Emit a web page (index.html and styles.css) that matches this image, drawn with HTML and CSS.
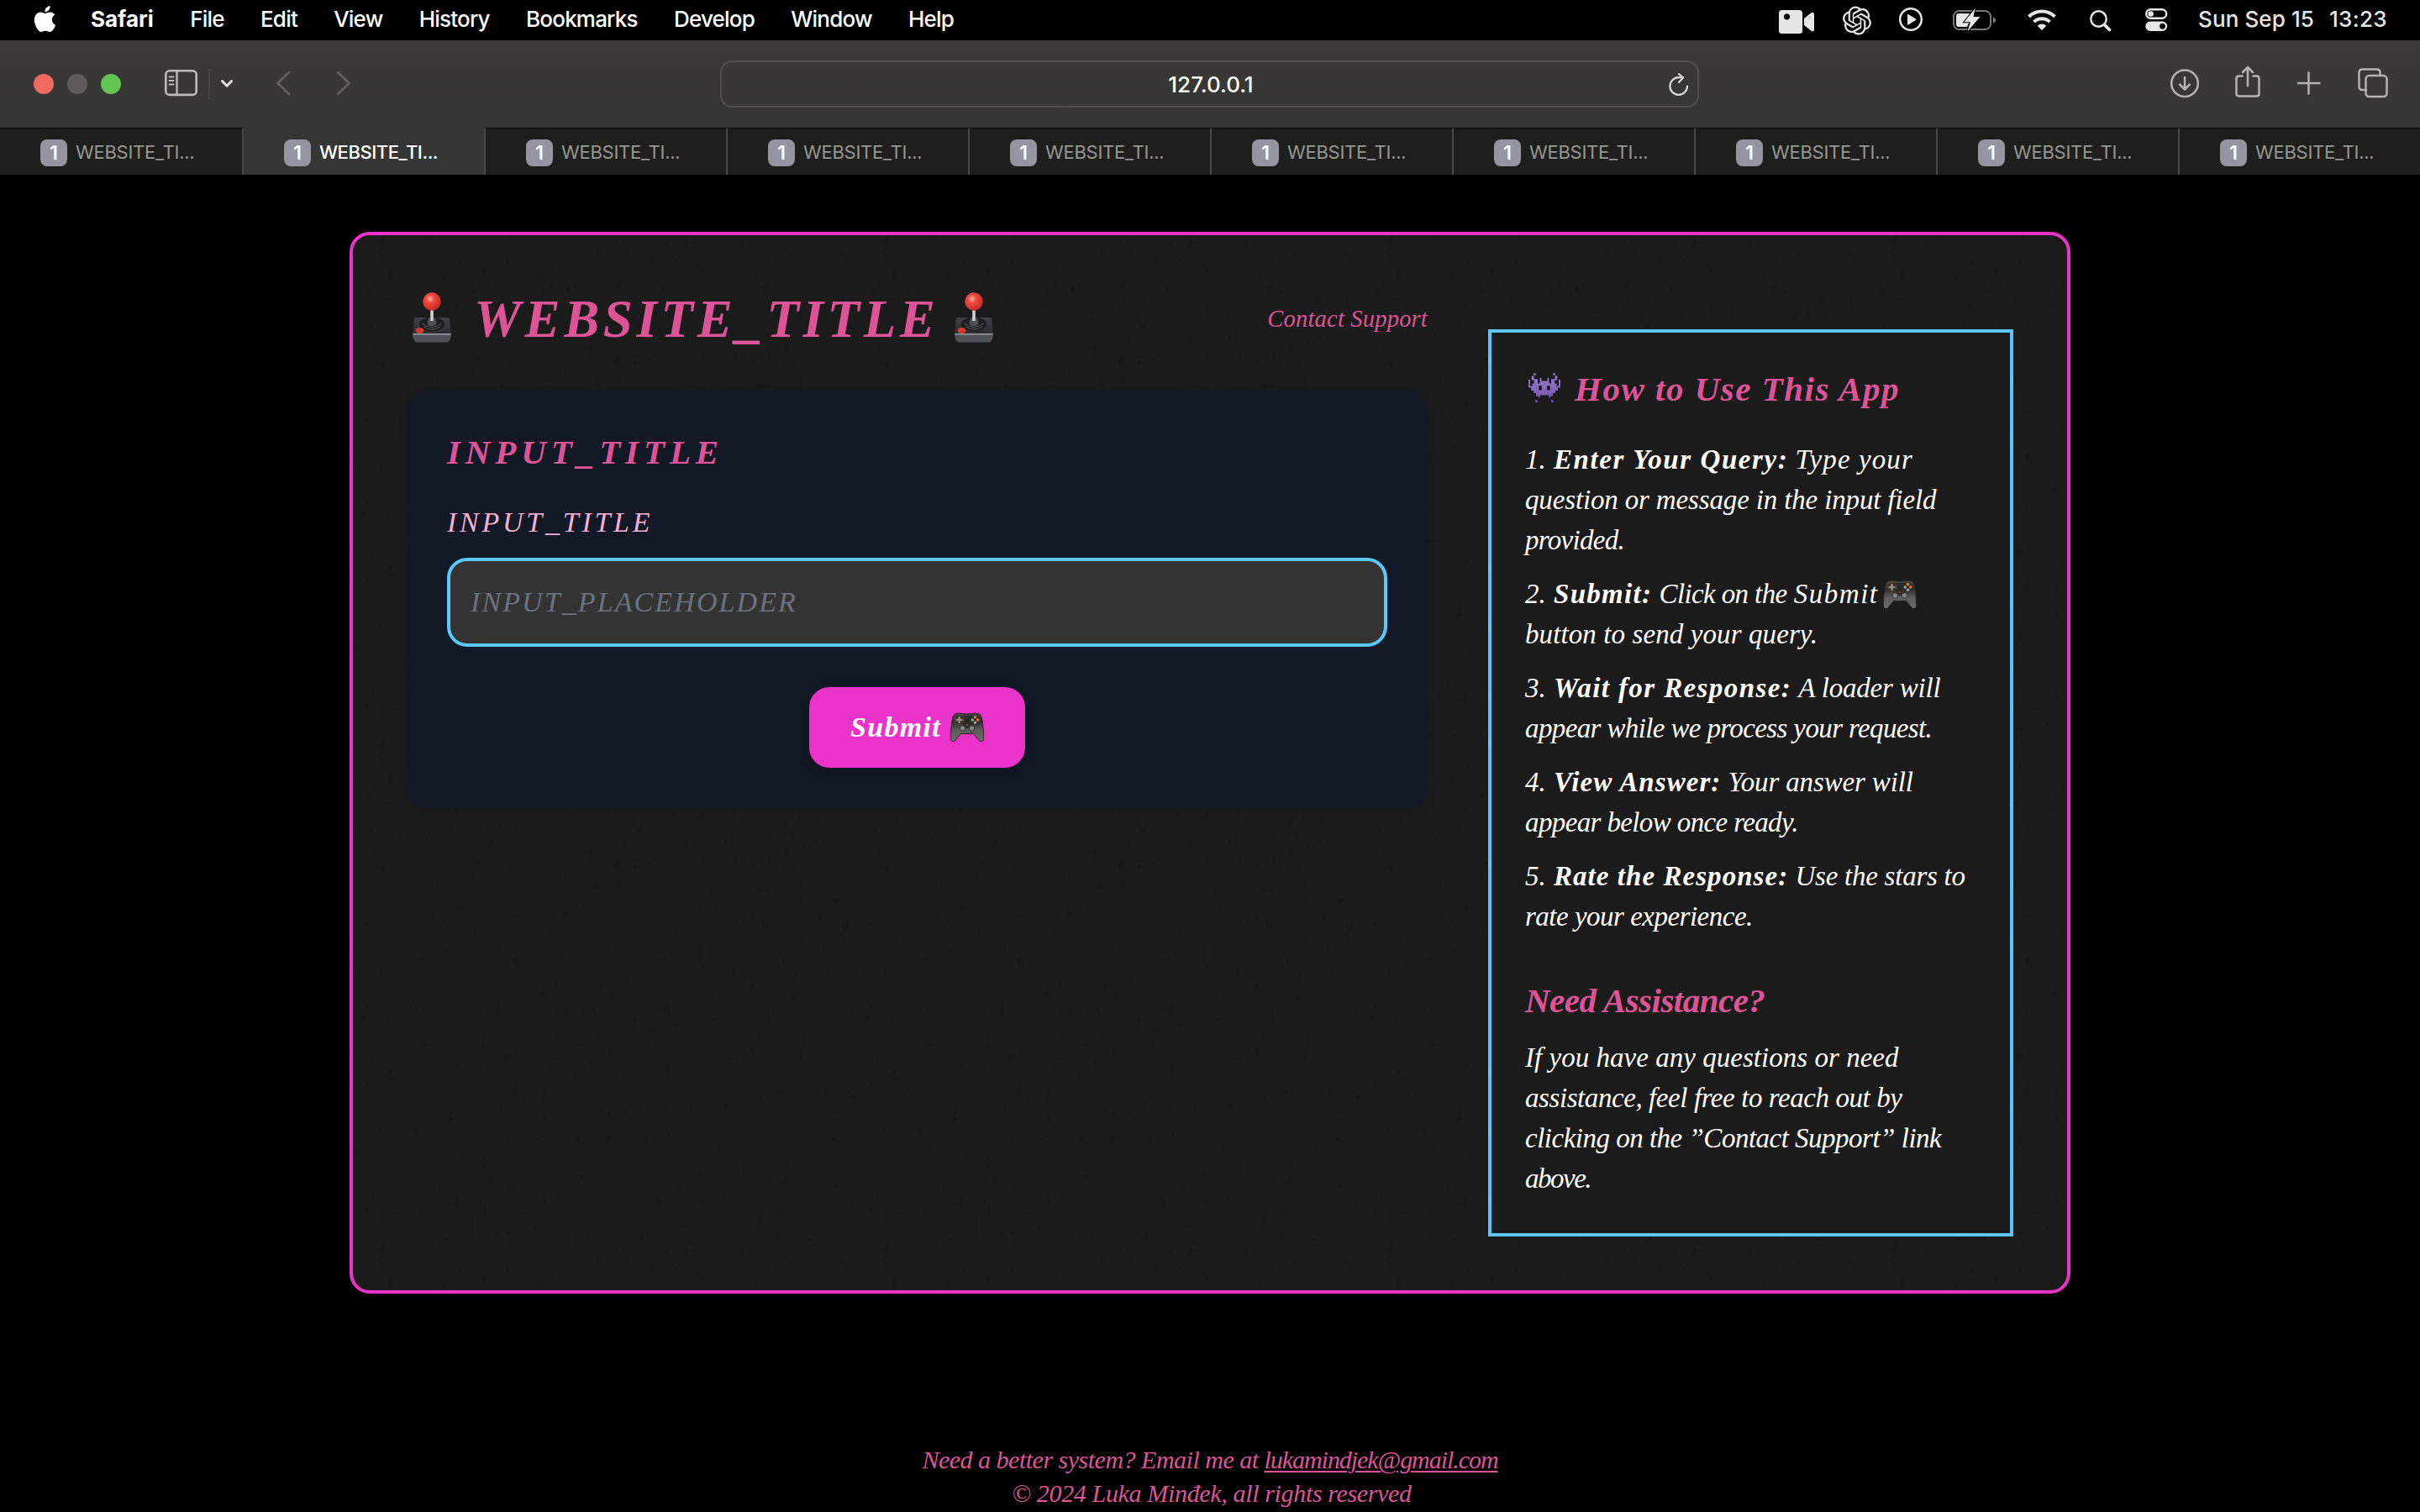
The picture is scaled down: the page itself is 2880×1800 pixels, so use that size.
FILE: index.html
```html
<!DOCTYPE html>
<html lang="en">
<head>
<meta charset="utf-8">
<title>WEBSITE_TITLE</title>
<link rel="stylesheet" href="styles.css">
</head>
<body>
<svg class="defs" aria-hidden="true">
  <defs>
    <linearGradient id="base" x1="0" y1="0" x2="0" y2="1"><stop offset="0" stop-color="#3f4147"/><stop offset="1" stop-color="#2b2c31"/></linearGradient>
    <radialGradient id="ball" cx=".4" cy=".35" r=".65"><stop offset="0" stop-color="#ffb3ac"/><stop offset=".35" stop-color="#f0483f"/><stop offset="1" stop-color="#c32a22"/></radialGradient>
    <linearGradient id="pad" x1="0" y1="0" x2="0" y2="1"><stop offset="0" stop-color="#4a4a48"/><stop offset=".3" stop-color="#2c2c2b"/><stop offset=".6" stop-color="#5c5d59"/><stop offset="1" stop-color="#6a6b66"/></linearGradient>
    <linearGradient id="alien" x1="0" y1="0" x2="0" y2="1"><stop offset="0" stop-color="#9a80c9"/><stop offset="1" stop-color="#7350a6"/></linearGradient>
  </defs>
  <symbol id="joystick" viewBox="0 0 46 60">
    <path d="M4 30h38q2 0 2.300 2l1.500 17H.2L1.700 32q.3-2 2.300-2z" fill="url(#base)"/>
    <path d="M.2 49h45.600v3q-.5 5-4 7.500H4.200Q.7 57 .2 52z" fill="#50525a"/>
    <path d="M.5 49.700h45" stroke="#9b9ca0" stroke-width="1.500"/>
    <ellipse cx="23" cy="38" rx="15" ry="8.500" fill="#1d1e20"/>
    <path d="M11 37q12 9 24 0M13 41q10 6 20 0" stroke="#55565a" fill="none"/>
    <path d="M18 34q1-5 5-5t5 5q2 6-5 6t-5-6z" fill="#4f5053"/>
    <path d="M21 20h4v14h-4z" fill="#a9aaad"/><path d="M22.300 20h1.500v14h-1.500z" fill="#e3e3e3"/>
    <circle cx="23" cy="11" r="10.700" fill="url(#ball)"/>
    <ellipse cx="8.500" cy="45.500" rx="5" ry="3.600" fill="#d8372c"/>
  </symbol>
  <symbol id="gamepad" viewBox="0 0 40 36">
    <path d="M4 3.500Q6 1 11 1q3 1 9 1t9-1q5 0 7 2.500 2 3 3 15t.5 14q-1 3-4.500 2l-7.500-9h-15l-7.500 9q-3.500 1-4.500-2Q0 30.500 1 18.500t3-15z" fill="url(#pad)" stroke="#242423"/>
    <path d="M13 4h14l-1 12q-6 6-12 0z" fill="#2b2b2a"/>
    <circle cx="10.500" cy="9" r="5.500" fill="#2c2926" stroke="#71492f" stroke-width=".8"/>
    <path d="M10.500 5v8M6.500 9h8" stroke="#8c8d8a" stroke-width="2.600"/>
    <circle cx="29.500" cy="9" r="5.500" fill="#292a29"/>
    <circle cx="29.500" cy="5.800" r="1.800" fill="#f4772f"/><circle cx="32.700" cy="9" r="1.800" fill="#f4772f"/>
    <circle cx="26.300" cy="9" r="1.800" fill="#a1a29e"/><circle cx="29.500" cy="12.300" r="1.800" fill="#a1a29e"/>
    <circle cx="14.500" cy="19" r="3.200" fill="#858682" stroke="#343533"/><circle cx="25.500" cy="19" r="3.200" fill="#858682" stroke="#343533"/>
    <circle cx="20" cy="15" r="1" fill="#a9552a"/>
  </symbol>
  <symbol id="invader" viewBox="0 0 14 12">
    <path d="M2.500 0h1.300v1H3v1.200h1.500V4H5V1.700h1V3h2V1.700h1V4h.5V2.200H11V1h-.8V0h1.300v1h.8v2h-1v1h.7v1h.5V2.500h1V6h-1v1.200h-1v1h-1v1.200h-1v.6H9v.6h1.800v1.200H9.500v-1H8.600V9H5.400v1.800h-.9v1H3.200v-1.200H5V10h-.500v-.6h-1V8.200h-1v-1h-1V6h-1V2.500h1V5H2V4h.7V3h-1V1h.8z" fill="url(#alien)" stroke="#19131f" stroke-width=".35"/>
    <path d="M4.800 5h1.100v1.800H4.800zM8.100 5h1.100v1.800H8.100z" fill="#17121d"/>
  </symbol>
</svg>

<header class="menubar">
  <svg class="apple" viewBox="0 0 24 24"><path d="M12.152 6.896c-.948 0-2.415-1.078-3.960-1.040-2.040.027-3.910 1.183-4.961 3.014-2.117 3.675-.546 9.103 1.519 12.090 1.013 1.454 2.208 3.090 3.792 3.039 1.520-.065 2.090-.987 3.935-.987 1.831 0 2.350.987 3.960.948 1.637-.026 2.676-1.480 3.676-2.948 1.156-1.688 1.636-3.325 1.662-3.415-.039-.013-3.182-1.221-3.220-4.857-.026-3.040 2.480-4.494 2.597-4.559-1.429-2.090-3.623-2.324-4.390-2.376-2-.156-3.675 1.090-4.610 1.090zM15.530 3.830c.843-1.012 1.400-2.427 1.245-3.830-1.207.052-2.662.805-3.532 1.818-.780.896-1.454 2.338-1.273 3.714 1.338.104 2.715-.688 3.559-1.701"/></svg>
  <nav class="menus"><b>Safari</b><span>File</span><span>Edit</span><span>View</span><span>History</span><span>Bookmarks</span><span>Develop</span><span>Window</span><span>Help</span></nav>
  <div class="status">
    <svg width="44" height="48" viewBox="2116 0 44 48"><path fill-rule="evenodd" d="M2120.500 12h21q3.500 0 3.500 3.500v21q0 3.500-3.500 3.500h-21q-3.500 0-3.500-3.500v-21q0-3.500 3.500-3.500zm6 4.200a3.700 3.700 0 1 0 .01 0zM2147 22l8.500-6.700q3.500-1.500 3.500 1.500v18.400q0 3-3.500 1.500L2147 30z"/></svg>
    <svg class="g33" width="34" height="48" viewBox="0 -5.300 24 33.880"><path d="M22.2819 9.8211a5.9847 5.9847 0 0 0-.5157-4.9108 6.0462 6.0462 0 0 0-6.5098-2.9A6.0651 6.0651 0 0 0 4.9807 4.1818a5.9847 5.9847 0 0 0-3.9977 2.9 6.0462 6.0462 0 0 0 .7427 7.0966 5.98 5.98 0 0 0 .511 4.9107 6.051 6.051 0 0 0 6.5146 2.9001A5.9847 5.9847 0 0 0 13.2599 24a6.0557 6.0557 0 0 0 5.7718-4.2058 5.9894 5.9894 0 0 0 3.9977-2.9001 6.0557 6.0557 0 0 0-.7475-7.0729zm-9.022 12.6081a4.4755 4.4755 0 0 1-2.8764-1.0408l.1419-.0804 4.7783-2.7582a.7948.7948 0 0 0 .3927-.6813v-6.7369l2.02 1.1686a.071.071 0 0 1 .038.052v5.5826a4.504 4.504 0 0 1-4.4945 4.4944zm-9.6607-4.1254a4.4708 4.4708 0 0 1-.5346-3.0137l.142.0852 4.783 2.7582a.7712.7712 0 0 0 .7806 0l5.8428-3.3685v2.3324a.0804.0804 0 0 1-.0332.0615L9.74 19.9502a4.4992 4.4992 0 0 1-6.1408-1.6464zM2.3408 7.8956a4.485 4.485 0 0 1 2.3655-1.9728V11.6a.7664.7664 0 0 0 .3879.6765l5.8144 3.3543-2.0201 1.1685a.0757.0757 0 0 1-.071 0l-4.8303-2.7865A4.504 4.504 0 0 1 2.3408 7.872zm16.5963 3.8558L13.1038 8.364 15.1192 7.2a.0757.0757 0 0 1 .071 0l4.8303 2.7913a4.4944 4.4944 0 0 1-.6765 8.1042v-5.6772a.79.79 0 0 0-.407-.667zm2.0107-3.0231l-.142-.0852-4.7735-2.7818a.7759.7759 0 0 0-.7854 0L9.409 9.2297V6.8974a.0662.0662 0 0 1 .0284-.0615l4.8303-2.7866a4.4992 4.4992 0 0 1 6.6802 4.66zM8.3065 12.863l-2.02-1.1638a.0804.0804 0 0 1-.038-.0567V6.0742a4.4992 4.4992 0 0 1 7.3757-3.4537l-.142.0805L8.704 5.459a.7948.7948 0 0 0-.3927.6813zm1.0976-2.3654l2.602-1.4998 2.6069 1.4998v2.9994l-2.5974 1.4997-2.6067-1.4997Z"/></svg>
    <svg class="g32" width="30" height="48" viewBox="2259 0 30 48"><circle cx="2274" cy="23" r="12.800" fill="none" stroke="#e6e6e6" stroke-width="2.500"/><path d="M2270 17.500v11.500q0 1 1 .6l9-5.500q1-.8 0-1.600l-9-5.500q-1-.5-1 .5z"/></svg>
    <svg class="g34" width="53" height="48" viewBox="2323 0 53 48"><rect x="2325" y="13" width="44" height="22" rx="6.500" fill="none" stroke="#777" stroke-width="2"/><path d="M2372 20.500q3 1 3 3.500t-3 3.500z" fill="#777"/><path d="M2331 16h14l-6 9h5l-3 7h-10q-3 0-3-3V19q0-3 3-3z"/><path d="M2350.500 10l-13 16.200h7.500l-3.500 11.300 15-17.500h-8z" stroke="#000" stroke-width="2" paint-order="stroke"/></svg>
    <svg class="g36" width="36" height="48" viewBox="2412 0 36 48"><path fill="none" stroke="#e6e6e6" stroke-width="4" d="M2414.500 19.800a22.500 22.500 0 0 1 31 0M2420.500 26a14 14 0 0 1 19 0"/><path d="M2430 36l-5.300-5.300a7.800 7.800 0 0 1 10.600 0z"/></svg>
    <svg class="g38" width="28" height="48" viewBox="2486 0 28 48"><g fill="none" stroke="#e6e6e6"><circle cx="2497.500" cy="22.500" r="9.200" stroke-width="2.500"/><path d="M2504.500 29.500l6 6" stroke-width="3.800" stroke-linecap="round"/></g></svg>
    <svg class="g38" width="30" height="48" viewBox="2552 0 30 48"><rect x="2554.200" y="11.200" width="24" height="10.600" rx="5.300" fill="none" stroke="#e6e6e6" stroke-width="2.400"/><circle cx="2559.600" cy="16.500" r="3.300"/><path fill-rule="evenodd" d="M2559 25.500h14.500a5.700 5.700 0 0 1 0 11.400H2559a5.700 5.700 0 0 1 0-11.400zm14.500 2.200a3.500 3.500 0 1 0 .01 0z"/></svg>
    <span class="date">Sun Sep 15</span><span class="time">13:23</span>
  </div>
</header>

<div class="toolbar">
  <div class="tools-left">
    <i class="light red"></i><i class="light gray"></i><i class="light green"></i>
    <svg class="sidebar-icon" width="86" height="104" viewBox="194 48 86 104"><g fill="none" stroke="#bcbbb9"><rect x="197.300" y="84.300" width="36.400" height="28.600" rx="4.500" stroke-width="2.600"/><path d="M210.500 84v29" stroke-width="2.400"/><path d="M201.500 91.500h5M201.500 96h5M201.500 100.500h5" stroke-width="1.800" stroke-linecap="round"/></g><path d="M249 82v36" stroke="#4b4a48" stroke-width="1.500"/><path d="M264.500 96.500l5.500 5.700 5.500-5.700" fill="none" stroke="#e2e1e0" stroke-width="3" stroke-linecap="round" stroke-linejoin="round"/></svg>
    <svg class="arrows" width="92" height="104" viewBox="327 48 92 104"><path d="M344 86l-13.500 13 13.500 13M402 86l13.500 13-13.500 13" fill="none" stroke="#62615f" stroke-width="2.600" stroke-linecap="round" stroke-linejoin="round"/></svg>
  </div>
  <div class="address"><span>127.0.0.1</span>
    <svg width="26" height="52" viewBox="1985 74 26 52"><g fill="none" stroke="#dcdcdb" stroke-width="2.200" stroke-linecap="round" stroke-linejoin="round"><path d="M2008 102.500a10.300 10.300 0 1 1-10.300-10.300h5"/><path d="M1998 88l5 4.500-5 5.500" /></g></svg>
  </div>
  <div class="tools-right">
    <svg width="262" height="104" viewBox="2581 48 262 104"><g fill="none" stroke="#b4b3b1" stroke-width="2.500" stroke-linecap="round" stroke-linejoin="round"><circle cx="2600" cy="99.300" r="15.800"/><path d="M2600 92v14M2594 100.500l6 6 6-6"/><path d="M2668.500 90.500h-4q-3 0-3 3v18q0 3 3 3h21q3 0 3-3v-18q0-3-3-3h-4M2675 80.500v21.500M2669 86l6-6 6 6"/><path d="M2747.500 86.500v25M2735 99h25.500"/><path d="M2815.500 107h-4q-4 0-4-4V86.500q0-4 4-4h17q4 0 4 4v3"/><rect x="2815.500" y="90" width="25" height="25" rx="4"/></g></svg>
  </div>
</div>

<div class="tabs">
  <div class="tab"><i>1</i><span>WEBSITE_TI...</span></div>
  <div class="tab active"><i>1</i><span>WEBSITE_TI...</span></div>
  <div class="tab"><i>1</i><span>WEBSITE_TI...</span></div>
  <div class="tab"><i>1</i><span>WEBSITE_TI...</span></div>
  <div class="tab"><i>1</i><span>WEBSITE_TI...</span></div>
  <div class="tab"><i>1</i><span>WEBSITE_TI...</span></div>
  <div class="tab"><i>1</i><span>WEBSITE_TI...</span></div>
  <div class="tab"><i>1</i><span>WEBSITE_TI...</span></div>
  <div class="tab"><i>1</i><span>WEBSITE_TI...</span></div>
  <div class="tab"><i>1</i><span>WEBSITE_TI...</span></div>
</div>

<main class="card">
  <section class="main">
    <div class="head">
      <svg class="joy"><use href="#joystick"/></svg><h1>WEBSITE_TITLE</h1><svg class="joy"><use href="#joystick"/></svg>
      <a class="contact">Contact Support</a>
    </div>
    <form class="panel">
      <h2>INPUT_TITLE</h2>
      <label>INPUT_TITLE</label>
      <div class="field">INPUT_PLACEHOLDER</div>
      <button type="button"><span>Submit</span><svg class="pad"><use href="#gamepad"/></svg></button>
    </form>
  </section>
  <aside class="help">
    <h3><svg class="inv"><use href="#invader"/></svg><span>How to Use This App</span></h3>
    <p class="item"><span>1. <b class="b15">Enter Your Query:</b> <span class="s9">Type your</span></span><span class="m1">question or message in the input field</span><span class="m7">provided.</span></p>
    <p class="item"><span>2. <b class="b11">Submit:</b> <span class="m6">Click on the</span> <em>Submit</em><svg class="pad inline"><use href="#gamepad"/></svg></span><span class="s1">button to send your query.</span></p>
    <p class="item"><span>3. <b class="b13">Wait for Response:</b> <span class="m3">A loader will</span></span><span class="m6">appear while we process your request.</span></p>
    <p class="item"><span>4. <b class="b9">View Answer:</b> <span class="m1">Your answer will</span></span><span class="m6">appear below once ready.</span></p>
    <p class="item"><span>5. <b class="b9">Rate the Response:</b> <span class="m2">Use the stars to</span></span><span class="m5">rate your experience.</span></p>
    <h4>Need Assistance?</h4>
    <p><span class="s0">If you have any questions or need</span><span class="m4">assistance, feel free to reach out by</span><span class="m5">clicking on the &rdquo;Contact Support&rdquo; link</span><span class="m15">above.</span></p>
  </aside>
</main>

<footer>
  <p class="f1">Need a better system? Email me at <a>lukamindjek@gmail.com</a></p>
  <p class="f2">&copy; 2024 Luka Minđek, all rights reserved</p>
</footer>
</body>
</html>
```
FILE: styles.css
```css
* { box-sizing: border-box; margin: 0; padding: 0; }
html, body { width: 2880px; height: 1800px; overflow: hidden; background: #000; }
body { font-family: "Apple Chancery", "Liberation Serif", serif; font-style: italic; }
svg { display: block; flex: none; }
.defs { position: absolute; width: 0; height: 0; }

/* macOS menu bar */
.menubar { display: flex; align-items: center; height: 48px; padding: 0 32px 0 38px; color: #fff; font: 500 26px/46px Inter, sans-serif; }
.apple { width: 31px; height: 31px; fill: #fff; margin-top: -3px; }
.menus { display: flex; gap: 43.300px; height: 48px; margin-left: 39px; letter-spacing: -.8px; }
.menus b { font-weight: 700; letter-spacing: 0; }
.status { display: flex; margin-left: auto; fill: #e6e6e6; color: #e6e6e6; }
.g33 { margin-left: 33px; } .g32 { margin-left: 32px; } .g34 { margin-left: 34px; } .g36 { margin-left: 36px; } .g38 { margin-left: 38px; }
.date { width: 156px; margin-left: 34px; letter-spacing: .1px; }
.time { width: 76px; letter-spacing: .3px; }

/* Safari toolbar */
.toolbar { display: grid; grid-template-columns: 857px 1165px 1fr; height: 104px; background: linear-gradient(#3a3936, #353533); }
.tools-left { display: flex; align-items: center; padding-left: 40px; }
.light { width: 24px; height: 24px; border-radius: 50%; margin-right: 16px; }
.red { background: #ee6a5f; } .gray { background: #5d5c5a; } .green { background: #62c554; }
.sidebar-icon { margin-left: 34px; }
.arrows { margin-left: 47px; }
.address { display: flex; align-items: center; justify-content: center; position: relative; height: 56px; margin-top: 24px; padding: 1px 0 0 3px; border: 2px solid #4f4e4c; border-radius: 14px; color: #fff; font: 500 26px/52px Inter, sans-serif; }
.address svg { position: absolute; right: 9px; top: 0; }
.tools-right { display: flex; justify-content: flex-end; padding-right: 37px; }

/* Tab strip */
.tabs { display: grid; grid-template-columns: 290px repeat(8, 288px) 1fr; height: 56px; background: #1e1e1c; }
.tab { display: flex; align-items: center; gap: 10px; padding: 2px 0 0 48px; border-top: 1px solid #000; border-right: 2px solid #474745; color: #969693; font: 22px/30px Inter, sans-serif; letter-spacing: -.25px; }
.tab span { padding-bottom: 2px; }
.tab:last-child { border-right: 0; }
.active { background: #353533; border-top-color: #353533; color: #fff; font-weight: 500; letter-spacing: -.45px; }
.tab i { width: 32px; height: 32px; border-radius: 8px; background: #9595a1; color: #fff; text-align: center; font: 600 23px/33px Inter, sans-serif; }

/* App card */
.card { display: grid; grid-template-columns: 1215px 625px; gap: 72px; width: 2048px; height: 1264px; margin: 68px auto 0; padding: 64px; border: 4px solid #ea33c8; border-radius: 24px;
  background: #1b1b1b url("data:image/svg+xml,%3Csvg xmlns='http://www.w3.org/2000/svg' width='600' height='600'%3E%3Cfilter id='n' x='0' y='0' width='100%25' height='100%25' color-interpolation-filters='sRGB'%3E%3CfeTurbulence type='fractalNoise' baseFrequency='.1 .07' numOctaves='3' seed='4' stitchTiles='stitch'/%3E%3CfeColorMatrix values='0 0 0 0 0 0 0 0 0 0 0 0 0 0 0 4 0 0 0 -2.650'/%3E%3C/filter%3E%3Crect width='600' height='600' filter='url(%23n)' opacity='.2'/%3E%3C/svg%3E"); }
.head { display: flex; align-items: center; height: 72px; padding-left: 7px; margin-bottom: 48px; }
.joy { width: 46px; height: 60px; margin-top: -4px; }
h1 { font-size: 63px; line-height: 72px; letter-spacing: 4.600px; color: #dc5496; margin: 0 19px 0 27px; }
.contact { margin-left: auto; font-size: 28.500px; line-height: 70px; letter-spacing: .2px; color: #dc5496; }
.panel { height: 498px; padding: 48px; border-radius: 24px; background: #121826; box-shadow: 0 4px 12px rgba(0,0,0,.1); }
h2, h3, h4 { font-size: 41px; line-height: 56px; color: #dc5496; }
h2 { margin-top: -2px; letter-spacing: 5.900px; }
label { display: block; margin: 32px 0 18px; font-size: 34px; line-height: 48px; letter-spacing: 3.750px; color: #f1b0d4; }
.field { height: 106px; padding: 1px 24px 0; border: 4px solid #5ac8fa; border-radius: 24px; background: #333; color: #6b7280; font-size: 34px; line-height: 96px; letter-spacing: 2.100px; }
button { display: flex; align-items: center; width: 257px; height: 96px; margin: 48px auto 0; padding-left: 49px; border: 0; border-radius: 24px; background: #ea33c8; color: #fff; font: italic 700 34px/48px "Apple Chancery", "Liberation Serif", serif; letter-spacing: 1.300px; box-shadow: 0 4px 10px rgba(0,0,0,.2); }
.pad { width: 40px; height: 36px; }
button .pad { margin-left: 11px; }
.pad.inline { display: inline-block; vertical-align: -8px; margin-left: 5px; }

.help { margin-top: 48px; height: 1080px; padding: 40px; border: 4px solid #5ac8fa; background: #1b1b1b; color: #fff; font-size: 33px; line-height: 48px; }
.help p > span { display: block; white-space: nowrap; }
h3 { display: flex; margin: -1px 0 32px; letter-spacing: 1.500px; }
.inv { width: 42px; height: 36px; margin: 9px 15px 0 2px; }
.item + .item { margin-top: 16px; }
h4 { margin: 48px 0 16px; letter-spacing: -.5px; }
.help em { letter-spacing: 1.500px; }
.b15 { margin-left: 1px; letter-spacing: 1.580px; } .b13 { margin-left: 1px; letter-spacing: 1.400px; } .b11 { margin-left: 1px; letter-spacing: 1.300px; } .b9 { margin-left: 1px; letter-spacing: 1.050px; }
.s9 { letter-spacing: 1.100px; } .s1 { letter-spacing: .1px; } .s0 { letter-spacing: .03px; }
.m1 { letter-spacing: -.150px; } .m2 { letter-spacing: -.250px; } .m3 { letter-spacing: -.2px; } .m4 { letter-spacing: -.420px; }
.m5 { letter-spacing: -.5px; } .m6 { letter-spacing: -.620px; } .m7 { letter-spacing: -.7px; } .m15 { letter-spacing: -1.500px; }

footer { margin-top: 178px; text-align: center; color: #dc5496; font-size: 30px; line-height: 40px; }
.f1 { letter-spacing: -.5px; }
.f1 a { letter-spacing: -1.050px; text-decoration: underline; text-decoration-thickness: 2px; text-underline-offset: 3px; }
.f2 { letter-spacing: -.350px; padding-left: 4px; }
```
